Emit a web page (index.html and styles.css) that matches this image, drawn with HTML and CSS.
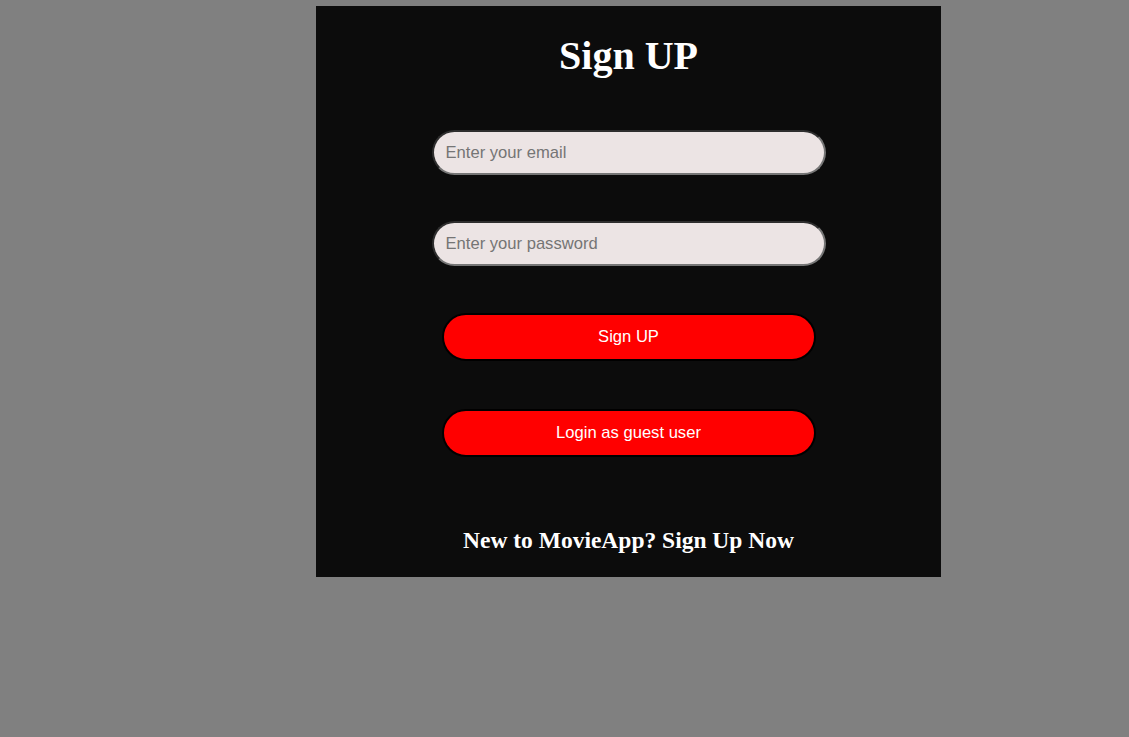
FILE: index.html
```html
<!DOCTYPE html>
<html lang="en">
<head>
<meta charset="utf-8">
<title>Sign UP</title>
<link rel="stylesheet" href="styles.css">
</head>
<body>
<div class="panel">
  <h1 class="title">Sign UP</h1>
  <form class="form">
    <input class="field field-email" type="email" placeholder="Enter your email">
    <input class="field field-password" type="password" placeholder="Enter your password">
    <button class="btn btn-signup" type="button">Sign UP</button>
    <button class="btn btn-guest" type="button">Login as guest user</button>
  </form>
  <p class="footer-text">New to MovieApp? Sign Up Now</p>
</div>
</body>
</html>
```

FILE: styles.css
```css
html, body {
  margin: 0;
  padding: 0;
}
body {
  background: #808080;
  min-height: 737px;
}
.panel {
  box-sizing: border-box;
  margin: 6px 0 0 316px;
  width: 625px;
  background: #0c0c0c;
  padding: 27px 0 23px;
  display: flex;
  flex-direction: column;
  align-items: center;
}
.title {
  margin: 0;
  font-family: "Liberation Serif", "Times New Roman", serif;
  font-weight: bold;
  font-size: 40px;
  line-height: 46px;
  color: #ffffff;
}
.form {
  margin-top: 51px;
  display: flex;
  flex-direction: column;
  align-items: center;
}
.field {
  box-sizing: border-box;
  width: 394px;
  height: 45px;
  margin: 0;
  padding: 0 12px;
  border-radius: 22.5px;
  border-width: 2px;
  border-style: solid;
  border-color: #2e2e2e #767676 #767676 #2e2e2e;
  background: #ece4e4;
  font-family: "Liberation Sans", Arial, sans-serif;
  font-size: 16.6px;
  color: #222;
  outline: none;
}
.field::placeholder {
  color: #757575;
}
.field-password {
  margin-top: 46px;
}
.btn {
  box-sizing: border-box;
  width: 374px;
  height: 48px;
  margin: 0;
  border: 2px solid #000000;
  border-radius: 24px;
  background: #ff0000;
  color: #ffffff;
  font-family: "Liberation Sans", Arial, sans-serif;
  font-size: 16.6px;
  cursor: pointer;
}
.btn-signup {
  margin-top: 47px;
}
.btn-guest {
  margin-top: 48px;
}
.footer-text {
  margin: 70px 0 0;
  font-family: "Liberation Serif", "Times New Roman", serif;
  font-weight: bold;
  font-size: 23.5px;
  line-height: 27px;
  color: #ffffff;
}
```
